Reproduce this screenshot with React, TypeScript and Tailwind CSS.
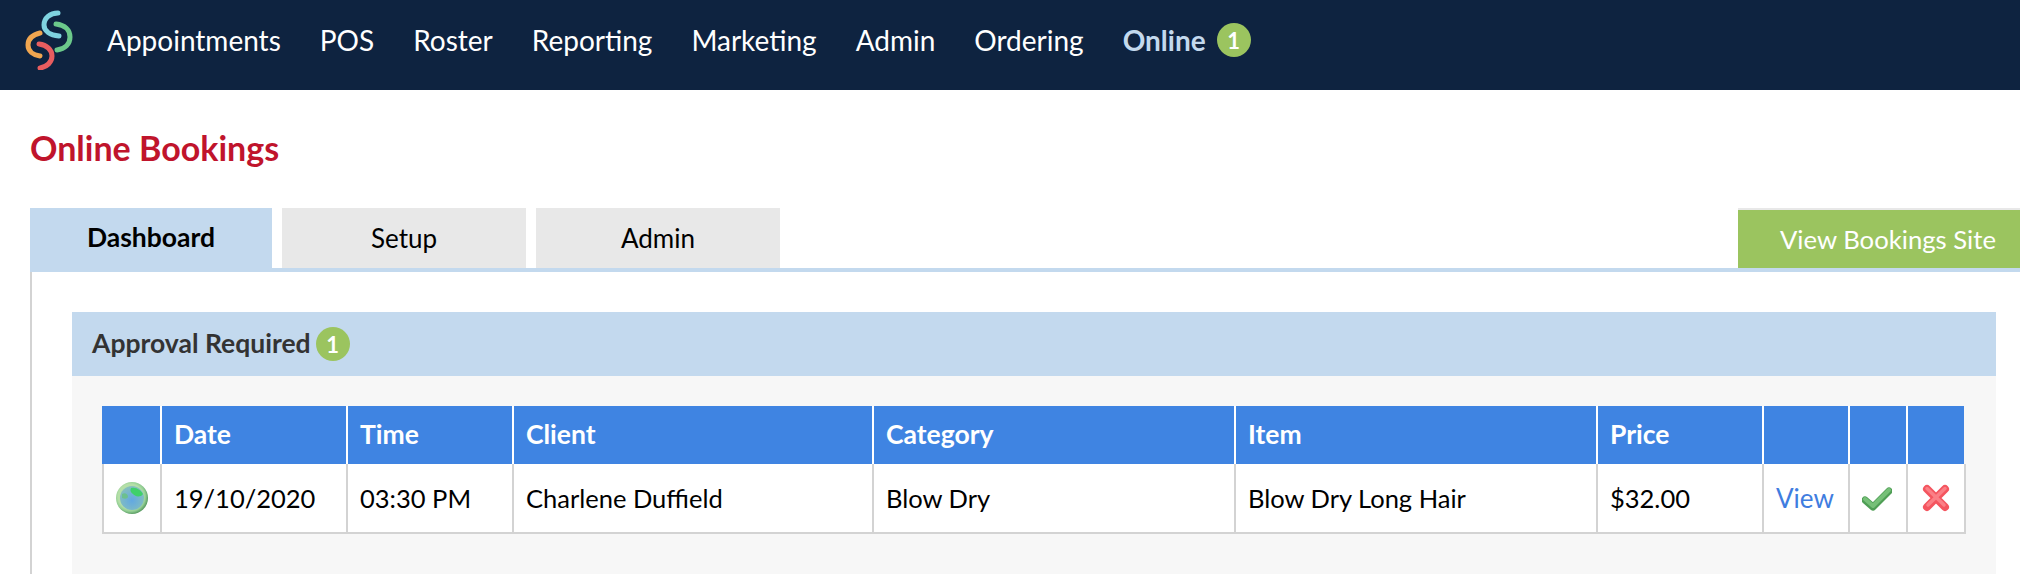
import React from 'react';

const NAV = ['Appointments', 'POS', 'Roster', 'Reporting', 'Marketing', 'Admin', 'Ordering'];

const Logo = () => (
  <svg width="48" height="60" viewBox="25 10 48 60" fill="none" strokeWidth="5" strokeLinecap="round" className="mb-[10px]">
    <path d="M58 13 C50 13 44 18 44 25 C44 31 50 35 59 36" stroke="#7fd3e0" />
    <path d="M56 24 C65 25 70 30 70 37 C70 44 65 49 57 50" stroke="#6cc98b" />
    <path d="M40 33 C32 35 28 39 28 45 C28 51 33 55 40 56" stroke="#f0a650" />
    <path d="M39 44 C47 45 52 50 52 56 C52 62 47 67 40 68" stroke="#e85d5f" />
  </svg>
);

const Globe = () => (
  <svg width="32" height="32" viewBox="0 0 32 32" className="block blur-[0.6px]">
    <defs>
      <radialGradient id="globeRim" cx="45%" cy="45%" r="55%">
        <stop offset="70%" stopColor="#b5dfa8" />
        <stop offset="85%" stopColor="#93cf94" />
        <stop offset="100%" stopColor="#5d9f66" />
      </radialGradient>
      <radialGradient id="globeSea" cx="50%" cy="60%" r="60%">
        <stop offset="0%" stopColor="#62a8e2" />
        <stop offset="100%" stopColor="#86c0bc" />
      </radialGradient>
    </defs>
    <circle cx="16" cy="16" r="16" fill="url(#globeRim)" />
    <circle cx="16" cy="16" r="12" fill="url(#globeSea)" />
    <path d="M15 6 C20 4.5 25 8 27 12 C25 15 21 15 19 13.5 C17 12 13 10 15 6 Z" fill="#3fd06a" />
    <path d="M6 12 C9 10 12 12 12 15 C11 17 9 17 6 16 Z" fill="#6cc08e" />
  </svg>
);

const Check = () => (
  <svg width="30" height="26" viewBox="0 0 30 26" className="block blur-[0.4px]">
    <path d="M3 15 L11 22 L27 6" fill="none" stroke="#4f9e55" strokeWidth="7" strokeLinecap="round" strokeLinejoin="round" />
    <path d="M3 14 L11 21 L27 5" fill="none" stroke="#76c078" strokeWidth="4" strokeLinecap="round" strokeLinejoin="round" />
  </svg>
);

const Cross = () => (
  <svg width="28" height="28" viewBox="0 0 28 28" className="block blur-[0.4px]">
    <path d="M5 5 L23 23 M23 5 L5 23" stroke="#f4555f" strokeWidth="8" strokeLinecap="round" />
    <path d="M5 4.5 L22 21 M23 4.5 L6 21" stroke="#fb7f86" strokeWidth="3.5" strokeLinecap="round" />
  </svg>
);

const Badge = () => (
  <span className="flex h-[34px] w-[34px] items-center justify-center rounded-full bg-[#9bc45f] text-[22px] font-bold text-white">
    1
  </span>
);

const HEAD_CELL = 'h-[58px] border-r-2 border-white px-[12px] text-left align-middle text-[26.5px] font-bold text-white bg-[#3f84e2]';
const BODY_CELL = 'h-[70px] border-r-2 border-b-2 border-[#d3d3d3] bg-white px-[12px] align-middle text-black';

export default function App() {
  return (
    <div className="h-[574px] w-[2020px] overflow-hidden bg-white font-['Lato',sans-serif] text-[26px]">
      <header className="flex h-[90px] items-center bg-[#0e2340] pl-[25px]">
        <Logo />
        <nav className="mb-[10px] ml-[34px] flex items-center gap-[39px] text-[28px] text-white">
          {NAV.map((item) => (
            <a key={item} href="#">{item}</a>
          ))}
          <span className="flex items-center gap-[11px]">
            <a href="#" className="font-bold text-[#c3d9ee]">Online</a>
            <Badge />
          </span>
        </nav>
      </header>

      <h1 className="flex h-[118px] items-center pb-[3px] pl-[30px] text-[34px] font-bold text-[#c0142c]">Online Bookings</h1>

      <div className="pl-[30px]">
        <div className="flex h-[64px] items-start gap-[10px] border-b-4 border-[#c3d9ee]">
          <a href="#" className="flex h-[60px] w-[242px] items-center justify-center bg-[#c3d9ee] text-[26.5px] font-bold text-black">Dashboard</a>
          <a href="#" className="flex h-[60px] w-[244px] items-center justify-center bg-[#e8e8e8] text-black">Setup</a>
          <a href="#" className="flex h-[60px] w-[244px] items-center justify-center bg-[#e8e8e8] text-black">Admin</a>
          <a href="#" className="ml-auto flex h-[60px] w-[282px] items-center justify-end border-t-2 border-[#e8e8e8] bg-[#9bc45f] pr-[24px] text-[25.7px] text-white">View Bookings Site</a>
        </div>

        <div className="border-l-2 border-[#d3d3d3] pt-[40px] pl-[40px] pr-[24px]">
          <div className="flex h-[64px] items-center gap-[5px] bg-[#c3d9ee] pl-[20px] text-[26.5px] font-bold text-[#333333]">
            Approval Required
            <Badge />
          </div>
          <div className="bg-[#f7f7f7] px-[30px] pt-[30px] pb-[40px]">
            <table className="w-[1864px] table-fixed border-separate border-spacing-0 text-[25.5px]">
              <colgroup>
                <col className="w-[60px]" />
                <col className="w-[186px]" />
                <col className="w-[166px]" />
                <col className="w-[360px]" />
                <col className="w-[362px]" />
                <col className="w-[362px]" />
                <col className="w-[166px]" />
                <col className="w-[86px]" />
                <col className="w-[58px]" />
                <col className="w-[58px]" />
              </colgroup>
              <thead>
                <tr>
                  <th className={HEAD_CELL} />
                  <th className={HEAD_CELL}>Date</th>
                  <th className={HEAD_CELL}>Time</th>
                  <th className={HEAD_CELL}>Client</th>
                  <th className={HEAD_CELL}>Category</th>
                  <th className={HEAD_CELL}>Item</th>
                  <th className={HEAD_CELL}>Price</th>
                  <th className={HEAD_CELL} />
                  <th className={HEAD_CELL} />
                  <th className="h-[58px] border-r-2 border-[#f7f7f7] bg-[#3f84e2]" />
                </tr>
              </thead>
              <tbody>
                <tr>
                  <td className="h-[70px] border-r-2 border-b-2 border-l-2 border-[#d3d3d3] bg-white pl-[12px] align-middle">
                    <Globe />
                  </td>
                  <td className={BODY_CELL}>19/10/2020</td>
                  <td className={BODY_CELL}>03:30 PM</td>
                  <td className={BODY_CELL}>Charlene Duffield</td>
                  <td className={BODY_CELL}>Blow Dry</td>
                  <td className={BODY_CELL}>Blow Dry Long Hair</td>
                  <td className={BODY_CELL}>$32.00</td>
                  <td className={BODY_CELL}>
                    <a href="#" className="text-[26px] text-[#3f7ddf]">View</a>
                  </td>
                  <td className="h-[70px] border-r-2 border-b-2 border-[#d3d3d3] bg-white pl-[12px] align-middle"><Check /></td>
                  <td className="h-[70px] border-r-2 border-b-2 border-[#d3d3d3] bg-white pl-[14px] align-middle"><Cross /></td>
                </tr>
              </tbody>
            </table>
          </div>
        </div>
      </div>
    </div>
  );
}
